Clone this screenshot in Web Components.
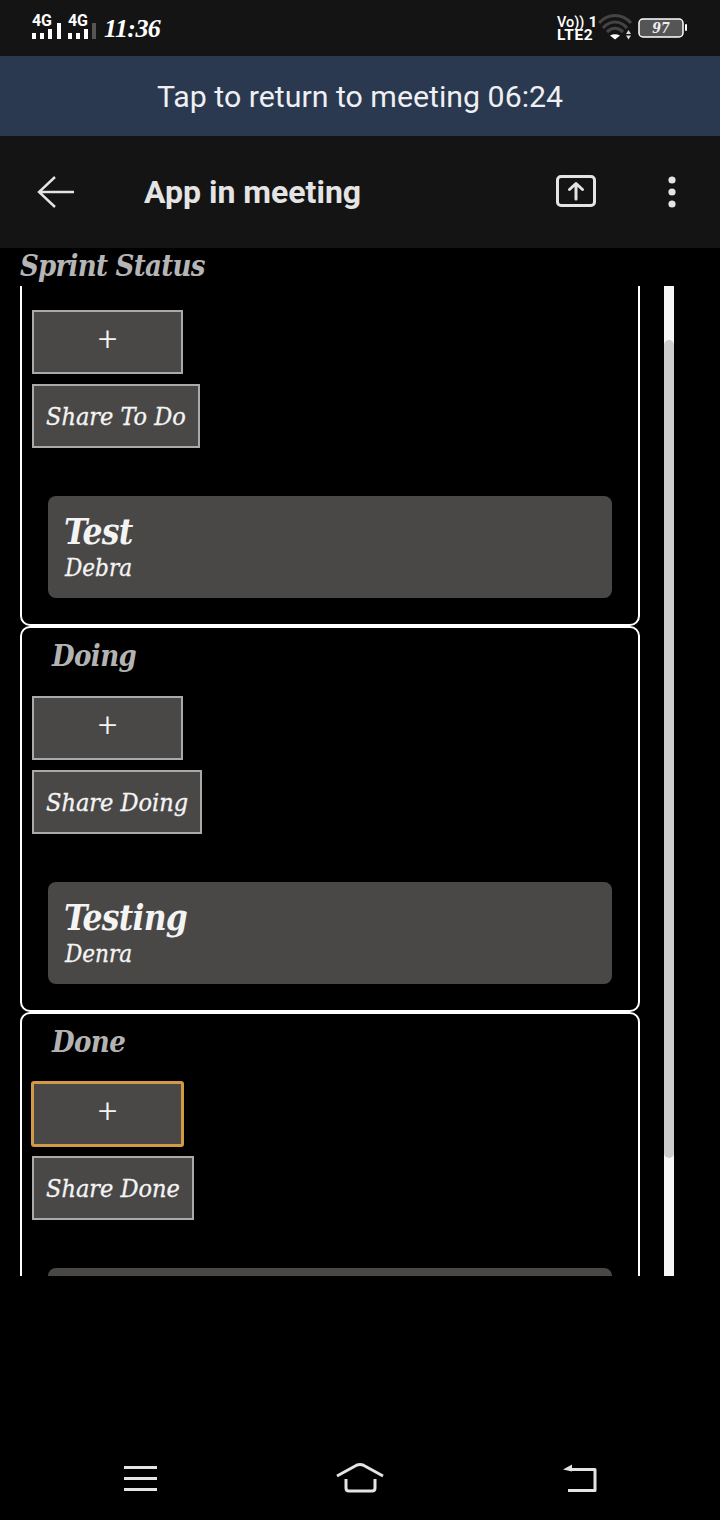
<!DOCTYPE html>
<html>
<head>
<meta charset="utf-8">
<title>App in meeting</title>
<style>
    html, body { margin: 0; padding: 0; background: #000; }
    body { width: 720px; height: 1520px; display: flex; flex-direction: column; overflow: hidden; font-family: "DejaVu Serif Condensed", "DejaVu Serif", serif; }
    sprint-board { flex: none; }
    nav-bar { margin-top: auto; }
</style>
</head>
<body>
<status-bar></status-bar>
<meeting-banner>Tap to return to meeting 06:24</meeting-banner>
<app-bar>App in meeting</app-bar>
<board-title>Sprint Status</board-title>
<sprint-board>
    <board-column>
        <board-button slot="actions" wide>+</board-button>
        <board-button slot="actions">Share To Do</board-button>
        <task-card heading="Test" owner="Debra"></task-card>
    </board-column>
    <board-column heading="Doing">
        <board-button slot="actions" wide>+</board-button>
        <board-button slot="actions">Share Doing</board-button>
        <task-card heading="Testing" owner="Denra"></task-card>
    </board-column>
    <board-column heading="Done">
        <board-button slot="actions" wide focused>+</board-button>
        <board-button slot="actions">Share Done</board-button>
        <task-card></task-card>
    </board-column>
</sprint-board>
<nav-bar></nav-bar>

<script>
const SERIF = '"DejaVu Serif Condensed", "DejaVu Serif", serif';

/** Base class: puts the markup from render() in an open shadow root. */
class ShadowElement extends HTMLElement {
    constructor() {
        super();
        this.attachShadow({ mode: 'open' });
    }
    connectedCallback() {
        this.shadowRoot.innerHTML = this.render();
    }
}

/** Phone status bar: signal, clock, volte, wifi, battery. */
class StatusBar extends ShadowElement {
    render() {
        return `
            <style>
                :host { display: flex; align-items: stretch; height: 56px; background: #141414; color: #fff; padding: 0 32px; box-sizing: border-box; }
                .sim { width: 36px; position: relative; }
                .sim b { display: block; font: 700 16px/14px Roboto, sans-serif; padding-top: 14px; letter-spacing: -.2px; }
                .sim svg { position: absolute; left: 0; top: 0; }
                svg { display: block; flex: none; }
                .sims { display: flex; }
                .clock { font: italic 700 26px/58px "Liberation Serif", serif; letter-spacing: -.6px; }
                .right { margin-left: auto; display: flex; }
                .volte { width: 42px; padding-top: 16px; padding-left: 1px; box-sizing: border-box; font: 700 15.5px/13px Roboto, sans-serif; letter-spacing: .6px; }
                .volte div { height: 13px; white-space: nowrap; }
                .volte small { font: 500 14.5px/13px Roboto, sans-serif; margin-right: 4px; letter-spacing: 0; }
                .bat { position: relative; width: 50px; height: 56px; }
                .bat span { position: absolute; left: 0; right: 4px; top: 18px; text-align: center; font: italic 700 14px/20px ${SERIF}; color: #eee; }
            </style>
            <div class="sims">
                <div class="sim"><b>4G</b>
                    <svg width="36" height="56" fill="#fff">
                        <rect x="0" y="33" width="4" height="6"/><rect x="8" y="33" width="4" height="6"/><rect x="16" y="29" width="4" height="10"/><rect x="25" y="23" width="4" height="16"/>
                    </svg>
                </div>
                <div class="sim"><b>4G</b>
                    <svg width="36" height="56" fill="#fff">
                        <rect x="0" y="33" width="4" height="6"/><rect x="8" y="33" width="4" height="6"/><rect x="16" y="29" width="4" height="10"/><rect x="24" y="23" width="4" height="16" fill="#555"/>
                    </svg>
                </div>
            </div>
            <div class="clock">11:36</div>
            <div class="right">
                <div class="volte"><div><small>Vo))</small>1</div><div>LTE2</div></div>
                <svg width="40" height="56" viewBox="0 0 40 56" fill="none">
                    <path d="M1 23 C10 13 24 13 33 23" stroke="#444" stroke-width="3.2"/>
                    <path d="M5 28 C12 20 22 20 29 28" stroke="#444" stroke-width="3.2"/>
                    <path d="M9 32 C14 27 20 27 25 32" stroke="#444" stroke-width="3.2"/>
                    <path d="M12 35.5 Q17 33 22 35.5 L17 39.5 Z" fill="#fff"/>
                    <path d="M28 34 l2.5 -4 l2.5 4z M28 35.5 h5 l-2.5 4z" fill="#ddd"/>
                </svg>
                <div class="bat">
                    <svg width="50" height="56" viewBox="0 0 50 56" fill="none">
                        <rect x="1" y="19" width="44" height="18" rx="4" fill="#555" stroke="#fff" stroke-width="1.5"/>
                        <rect x="47" y="24" width="2" height="7" rx="1" fill="#fff"/>
                    </svg>
                    <span>97</span>
                </div>
            </div>
        `;
    }
}

/** Blue strip that leads back to the call. */
class MeetingBanner extends ShadowElement {
    render() {
        return `
            <style>
                :host { display: block; height: 80px; background: #2a3850; color: #eef0f3; text-align: center; font: 400 30.3px/82px Roboto, sans-serif; }
            </style>
            <slot></slot>
        `;
    }
}

/** Toolbar with back arrow, title, share and overflow icons. */
class AppBar extends ShadowElement {
    render() {
        return `
            <style>
                :host { display: flex; align-items: center; height: 112px; background: #141414; color: #e4e4e4; padding: 0 0 0 32px; box-sizing: border-box; }
                .title { flex: 1; margin-left: 68px; font: 700 32px/114px Roboto, sans-serif; }
                svg { display: block; flex: none; }
                .share { margin-right: 26px; }
            </style>
            <svg width="44" height="36" viewBox="0 0 44 36" fill="none" stroke="#e4e4e4" stroke-width="2.4">
                <path d="M42 18 H7 M23 3 L7 18 L23 33"/>
            </svg>
            <div class="title"><slot></slot></div>
            <svg class="share" width="44" height="36" viewBox="0 0 44 36" fill="none" stroke="#e4e4e4" stroke-width="3" stroke-linejoin="round" stroke-linecap="round">
                <rect x="3.5" y="2.5" width="37" height="29" rx="3.5"/>
                <path d="M22 25 V10 M15.5 15.5 L22 9.5 L28.5 15.5"/>
            </svg>
            <svg width="96" height="36" viewBox="0 0 96 36" fill="#e4e4e4">
                <circle cx="48" cy="6" r="3.6"/><circle cx="48" cy="18" r="3.6"/><circle cx="48" cy="30" r="3.6"/>
            </svg>
        `;
    }
}

/** Grey heading over the board. */
class BoardTitle extends ShadowElement {
    render() {
        return `
            <style>
                :host { display: block; height: 38px; padding-left: 20px; color: #b5b5b5; font: italic 700 29px/36px ${SERIF}; letter-spacing: -.75px; }
            </style>
            <slot></slot>
        `;
    }
}

/** Outlined column with heading, action buttons and cards. */
class BoardColumn extends ShadowElement {
    render() {
        return `
            <style>
                :host { display: block; box-sizing: border-box; width: 620px; height: 386px; border: 2px solid #fff; border-radius: 10px; padding: 0 10px; }
                h2 { margin: 0; height: 68px; padding-left: 20px; color: #b3b3b3; font: italic 700 29px/56px ${SERIF}; letter-spacing: -.6px; }
                .actions { display: flex; flex-direction: column; align-items: flex-start; gap: 10px; margin-bottom: 48px; }
                .cards { padding: 0 16px; }
            </style>
            <h2>${this.getAttribute('heading') || ''}</h2>
            <div class="actions"><slot name="actions"></slot></div>
            <div class="cards"><slot></slot></div>
        `;
    }
}

/** Square grey button; wide ones hold the plus sign. */
class BoardButton extends ShadowElement {
    render() {
        return `
            <style>
                :host { display: block; box-sizing: border-box; height: 64px; padding: 0 12px 0 12px; border: 2px solid #aaa; background: #494847; color: #f4f4f4; font: italic 400 25px/62px ${SERIF}; -webkit-text-stroke: .3px #f4f4f4; white-space: nowrap; }
                :host([wide]) { width: 151px; padding: 0; text-align: center; font: 300 34px/52px Roboto, sans-serif; -webkit-text-stroke: 0; }
                :host([focused]) { border-color: #d39a45; border-radius: 2px; box-shadow: 0 0 0 1px #d39a45; }
            </style>
            <slot></slot>
        `;
    }
}

/** Task card: bold heading and owner below it. */
class TaskCard extends ShadowElement {
    render() {
        const heading = this.getAttribute('heading') || '';
        const owner = this.getAttribute('owner') || '';
        return `
            <style>
                :host { display: block; box-sizing: border-box; height: 102px; padding: 16px 16px 0; border-radius: 8px; background: #494847; color: #f4f4f4; }
                .heading { font: italic 700 35px/40px ${SERIF}; letter-spacing: -.8px; }
                .owner { padding-left: 1px; font: italic 400 24px/32px ${SERIF}; -webkit-text-stroke: .3px #f4f4f4; }
            </style>
            <div class="heading">${heading}</div>
            <div class="owner">${owner}</div>
        `;
    }
}

/** Android navigation keys. */
class NavBar extends ShadowElement {
    render() {
        return `
            <style>
                :host { display: grid; grid-template-columns: repeat(3, 220px); justify-items: center; height: 56px; padding: 0 30px 3px; }
                svg { display: block; }
            </style>
            <svg width="50" height="40" viewBox="0 0 50 40" fill="none" stroke="#e4e4e4" stroke-width="3">
                <path d="M9 6.5 H42 M9 17.5 H42 M9 28.5 H42"/>
            </svg>
            <svg width="50" height="40" viewBox="0 0 50 40" fill="none" stroke="#e4e4e4" stroke-width="3" stroke-linejoin="round">
                <path d="M2 15 L22 4 Q25 3 28 4 L48 15"/>
                <path d="M11 18 V27 Q11 30 14 30 H37 Q40 30 40 27 V18"/>
            </svg>
            <svg width="50" height="40" viewBox="0 0 50 40" fill="none" stroke="#e4e4e4" stroke-width="3" stroke-linejoin="round">
                <path d="M14 8.5 H40 V29.5 H13"/>
                <path d="M8 8.5 L17 3.5 V10.5 Z" fill="#e4e4e4" stroke="none"/>
            </svg>
        `;
    }
}

/** Scrolled pane plus a drawn scrollbar, as the window hides native ones. */
class SprintBoard extends ShadowElement {
    render() {
        return `
            <style>
                :host { display: flex; gap: 24px; width: 654px; height: 990px; margin-left: 20px; }
                .pane { width: 620px; box-sizing: border-box; padding: 19px 0 21px; overflow: hidden; }
                .rail { width: 10px; background: #f5f5f5; }
                .thumb { background: #ccc; border-radius: 5px; }
            </style>
            <div class="pane"><slot></slot></div>
            <div class="rail"><div class="thumb"></div></div>
        `;
    }
    connectedCallback() {
        super.connectedCallback();
        const pane = this.shadowRoot.querySelector('.pane');
        const thumb = this.shadowRoot.querySelector('.thumb');
        pane.scrollTop = 65;
        const ratio = pane.clientHeight / pane.scrollHeight;
        thumb.style.marginTop = pane.scrollTop * ratio + 'px';
        thumb.style.height = pane.clientHeight * ratio + 'px';
    }
}

customElements.define('status-bar', StatusBar);
customElements.define('meeting-banner', MeetingBanner);
customElements.define('app-bar', AppBar);
customElements.define('board-title', BoardTitle);
customElements.define('board-column', BoardColumn);
customElements.define('board-button', BoardButton);
customElements.define('task-card', TaskCard);
customElements.define('nav-bar', NavBar);
customElements.define('sprint-board', SprintBoard);
</script>
</body>
</html>
